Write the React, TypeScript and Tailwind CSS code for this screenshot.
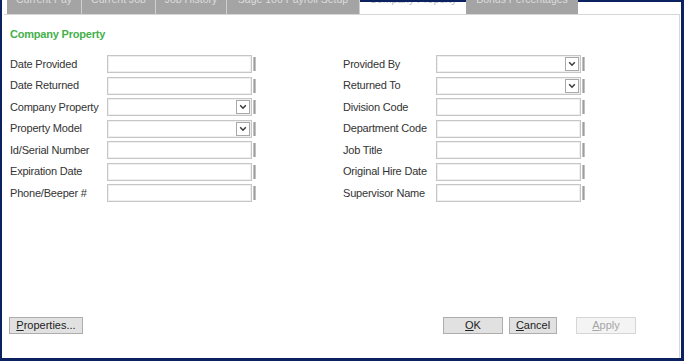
import React from "react";

const FONT = { fontFamily: '"Liberation Sans", Arial, sans-serif' };

function Chevron() {
  return (
    <svg width="8" height="6" viewBox="0 0 8 6">
      <path d="M1.2 1.3 L4 4.2 L6.8 1.3" fill="none" stroke="#3a3a3a" strokeWidth="1.5" />
    </svg>
  );
}

function Field({ label, combo, labelW }: { label: string; combo?: boolean; labelW: string }) {
  return (
    <div className="flex items-center h-[18px]">
      <div className={`${labelW} text-[11px] text-[#333] tracking-[-0.2px] leading-none`}>{label}</div>
      <div className="w-[145px] h-[18px] border border-[#c6c6c6] shadow-[inset_0_0_0_1px_#efefef] bg-white flex items-center justify-end pr-[1px]">
        {combo && (
          <div className="w-[14px] h-[14px] border border-[#a9a9a9] bg-white flex items-center justify-center">
            <Chevron />
          </div>
        )}
      </div>
      <div className="ml-[1px] w-[3px] h-[14px] bg-[#9d9d9d] border-x border-[#c2c2c2]" />
    </div>
  );
}

function Tab({ w, label }: { w: string; label: string }) {
  return (
    <div className={`${w} h-[14px] bg-[#a4a4a4] overflow-hidden flex justify-center border-r border-[#cfcfcf]`}>
      <span className="text-[10.5px] leading-[11px] -mt-[6px] text-[#dcdcdc] whitespace-nowrap">{label}</span>
    </div>
  );
}

function Btn({ w, children, disabled }: { w: string; children: React.ReactNode; disabled?: boolean }) {
  return (
    <div
      className={`${w} h-[17px] flex items-center justify-center text-[11px] leading-none border ${
        disabled ? "bg-[#f4f4f4] border-[#d6d6d6] text-[#a6a6a6]" : "bg-[#e1e1e1] border-[#adadad] text-[#222]"
      }`}
    >
      {children}
    </div>
  );
}

export default function App() {
  const left = [
    { l: "Date Provided" },
    { l: "Date Returned" },
    { l: "Company Property", c: true },
    { l: "Property Model", c: true },
    { l: "Id/Serial Number" },
    { l: "Expiration Date" },
    { l: "Phone/Beeper #" },
  ];
  const right = [
    { l: "Provided By", c: true },
    { l: "Returned To", c: true },
    { l: "Division Code" },
    { l: "Department Code" },
    { l: "Job Title" },
    { l: "Original Hire Date" },
    { l: "Supervisor Name" },
  ];
  return (
    <div style={FONT} className="w-[684px] h-[361px] bg-white border-l-2 border-r-[3px] border-b-[3px] border-[#0b2160] flex flex-col overflow-hidden">
      <div className="flex h-[14px] shrink-0">
        <div className="w-[5px]" />
        <Tab w="w-[75px]" label="Current Pay" />
        <Tab w="w-[74px]" label="Current Job" />
        <Tab w="w-[71px]" label="Job History" />
        <Tab w="w-[133px]" label="Sage 100 Payroll Setup" />
        <div className="w-[106px] h-[14px] bg-white border-t-2 border-[#0b2160] overflow-hidden flex justify-center">
          <span className="text-[10.5px] leading-[11px] -mt-[8px] text-[#b3bcc8] whitespace-nowrap">Company Property</span>
        </div>
        <div className="w-[112px] h-[14px] bg-[#a4a4a4] overflow-hidden flex justify-center">
          <span className="text-[10.5px] leading-[11px] -mt-[6px] text-[#dcdcdc] whitespace-nowrap">Bonus Percentages</span>
        </div>
        <div className="flex-1 border-t-2 border-[#0b2160]" />
      </div>
      <div className="flex-1 flex flex-col border-t border-r border-[#d6d6d6] ml-[2px] mr-[1px]">
        <div className="pl-[6px] mt-[13px] text-[11px] leading-[13px] font-bold text-[#44b04a] tracking-[-0.2px]">
          Company Property
        </div>
        <div className="flex pl-[6px] mt-[14px]">
          <div className="flex flex-col gap-[3.5px]">
            {left.map((f) => (
              <Field key={f.l} label={f.l} combo={f.c} labelW="w-[97px]" />
            ))}
          </div>
          <div className="flex flex-col gap-[3.5px] ml-[87px]">
            {right.map((f) => (
              <Field key={f.l} label={f.l} combo={f.c} labelW="w-[93px]" />
            ))}
          </div>
        </div>
        <div className="mt-auto mb-[24px] flex items-center pl-[5px]">
          <Btn w="w-[74px]">
            <span><u>P</u>roperties...</span>
          </Btn>
          <div className="ml-[360px] flex">
            <Btn w="w-[60px]">
              <span><u>O</u>K</span>
            </Btn>
            <div className="ml-[6px]">
              <Btn w="w-[48px]">
                <span><u>C</u>ancel</span>
              </Btn>
            </div>
            <div className="ml-[19px]">
              <Btn w="w-[60px]" disabled>
                <span><u>A</u>pply</span>
              </Btn>
            </div>
          </div>
        </div>
      </div>
    </div>
  );
}
